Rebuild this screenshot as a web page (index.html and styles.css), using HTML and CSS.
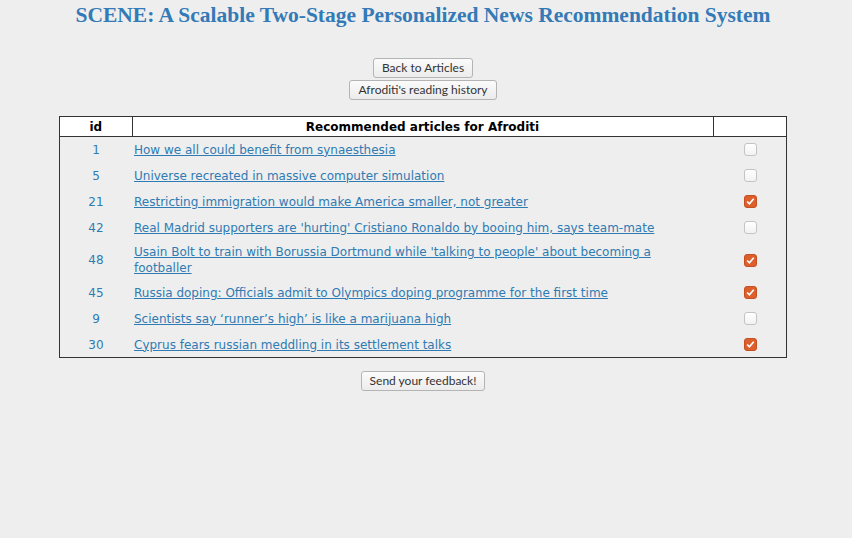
FILE: index.html
```html
<!DOCTYPE html>
<html>
<head>
<meta charset="utf-8">
<title>SCENE</title>
<link rel="stylesheet" href="styles.css">
</head>
<body>
<div class="page">
  <h1 class="title">SCENE: A Scalable Two-Stage Personalized News Recommendation System</h1>
  <div class="actions">
    <button class="btn">Back to Articles</button>
    <button class="btn">Afroditi's reading history</button>
  </div>
  <table class="recs">
    <thead>
      <tr><th class="c-id">id</th><th class="c-title">Recommended articles for Afroditi</th><th class="c-check"></th></tr>
    </thead>
    <tbody>
      <tr><td class="c-id">1</td><td class="c-title"><a href="#">How we all could benefit from synaesthesia</a></td><td class="c-check"><input type="checkbox"></td></tr>
      <tr><td class="c-id">5</td><td class="c-title"><a href="#">Universe recreated in massive computer simulation</a></td><td class="c-check"><input type="checkbox"></td></tr>
      <tr><td class="c-id">21</td><td class="c-title"><a href="#">Restricting immigration would make America smaller, not greater</a></td><td class="c-check"><input type="checkbox" checked></td></tr>
      <tr><td class="c-id">42</td><td class="c-title"><a href="#">Real Madrid supporters are 'hurting' Cristiano Ronaldo by booing him, says team-mate</a></td><td class="c-check"><input type="checkbox"></td></tr>
      <tr><td class="c-id">48</td><td class="c-title"><a href="#">Usain Bolt to train with Borussia Dortmund while 'talking to people' about becoming a footballer</a></td><td class="c-check"><input type="checkbox" checked></td></tr>
      <tr><td class="c-id">45</td><td class="c-title"><a href="#">Russia doping: Officials admit to Olympics doping programme for the first time</a></td><td class="c-check"><input type="checkbox" checked></td></tr>
      <tr><td class="c-id">9</td><td class="c-title"><a href="#">Scientists say ‘runner’s high’ is like a marijuana high</a></td><td class="c-check"><input type="checkbox"></td></tr>
      <tr><td class="c-id">30</td><td class="c-title"><a href="#">Cyprus fears russian meddling in its settlement talks</a></td><td class="c-check"><input type="checkbox" checked></td></tr>
    </tbody>
  </table>
  <div class="actions feedback">
    <button class="btn">Send your feedback!</button>
  </div>
</div>
</body>
</html>
```

FILE: styles.css
```css
html, body {
  margin: 0;
  padding: 0;
  background: #eeeeee;
}
.page {
  width: 846px;
  font-family: "DejaVu Sans", Verdana, sans-serif;
  font-size: 12px;
  color: #2f7bb3;
}
.title {
  margin: 0;
  padding-top: 4px;
  text-align: center;
  font-family: "Liberation Serif", Georgia, serif;
  font-weight: bold;
  font-size: 21.5px;
  line-height: 22px;
  color: #337ab7;
}
.actions {
  display: flex;
  flex-direction: column;
  align-items: center;
  gap: 2px;
  margin-top: 32px;
}
.feedback {
  margin-top: 13px;
}
.btn {
  font-family: Lato, "Open Sans", sans-serif;
  font-size: 12px;
  color: #333;
  height: 20px;
  padding: 0 8px;
  border: 1px solid #b4b4b4;
  border-radius: 3px;
  background: linear-gradient(#fbfbfb, #ececec);
  line-height: 18px;
}
.recs {
  width: 728px;
  margin: 16px auto 0;
  border-collapse: collapse;
  border: 1px solid #333;
}
.recs th {
  background: #fff;
  border: 1px solid #333;
  color: #000;
  font-weight: bold;
  font-size: 12px;
  height: 19px;
  padding: 0;
  line-height: 16px;
}
.recs td {
  padding: 3px 2px 4px;
  line-height: 16px;
  vertical-align: middle;
}
.recs tbody tr:last-child td {
  padding-bottom: 3px;
}
.c-id { width: 68px; text-align: center; }
.c-check { width: 69px; text-align: center; }
.recs td.c-title { padding-left: 2px; padding-right: 10px; }
.recs a {
  color: #2f7bb3;
  text-decoration: underline;
}
.recs input[type="checkbox"] {
  appearance: none;
  -webkit-appearance: none;
  width: 13px;
  height: 13px;
  margin: 3px auto;
  display: block;
  border: 1px solid #c4c4c4;
  border-radius: 3px;
  background: linear-gradient(#ffffff, #f2f2f2);
  position: relative;
  left: 1px;
}
.recs input[type="checkbox"]:checked {
  border-color: #c5501f;
  background: #dd5f2d url("data:image/svg+xml;utf8,<svg xmlns='http://www.w3.org/2000/svg' viewBox='0 0 13 13'><path d='M2.5 6.5 L5.2 9.2 L10.3 3.3' fill='none' stroke='white' stroke-width='2'/></svg>") center/11px 11px no-repeat;
}
```
